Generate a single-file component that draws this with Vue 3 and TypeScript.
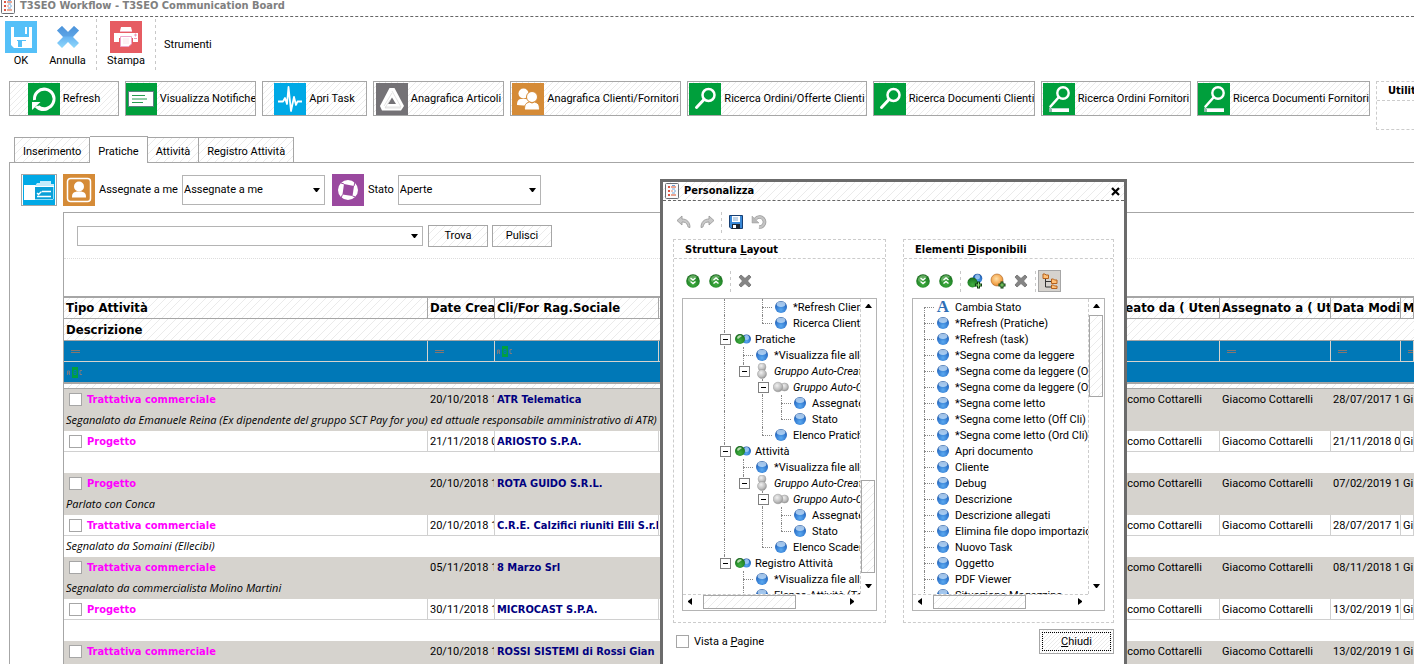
<script setup lang="ts">
import { ref } from 'vue'

interface Action { label: string; icon: string; width: number }
interface Row { type: string; created: string; company: string; note: string; modified: string }
interface Node { cells: string; icon: string; text: string; italic?: boolean }

const actions: Action[] = [
  { label: 'Refresh', icon: 'refresh', width: 110 },
  { label: 'Visualizza Notifiche', icon: 'note', width: 131 },
  { label: 'Apri Task', icon: 'pulse', width: 105 },
  { label: 'Anagrafica Articoli', icon: 'triangle', width: 131 },
  { label: 'Anagrafica Clienti/Fornitori', icon: 'people', width: 171 },
  { label: 'Ricerca Ordini/Offerte Clienti', icon: 'search', width: 180 },
  { label: 'Ricerca Documenti Clienti', icon: 'search', width: 162 },
  { label: 'Ricerca Ordini Fornitori', icon: 'searchbar', width: 150 },
  { label: 'Ricerca Documenti Fornitori', icon: 'searchbar', width: 173 },
]

const tabs = ['Inserimento', 'Pratiche', 'Attività', 'Registro Attività']
const activeTab = ref('Pratiche')
const assigned = ref('Assegnate a me')
const state = ref('Aperte')
const query = ref('')
const pageView = ref(false)

const rows: Row[] = [
  { type: 'Trattativa commerciale', created: '20/10/2018 1', company: 'ATR Telematica', note: 'Seganalato da Emanuele Reina (Ex dipendente del gruppo SCT Pay for you) ed attuale responsabile amministrativo di ATR)', modified: '28/07/2017 1' },
  { type: 'Progetto', created: '21/11/2018 0', company: 'ARIOSTO S.P.A.', note: '', modified: '21/11/2018 0' },
  { type: 'Progetto', created: '20/10/2018 1', company: 'ROTA GUIDO S.R.L.', note: 'Parlato con Conca', modified: '07/02/2019 1' },
  { type: 'Trattativa commerciale', created: '20/10/2018 1', company: 'C.R.E. Calzifici riuniti Elli S.r.l.', note: 'Segnalato da Somaini (Ellecibi)', modified: '28/07/2017 1' },
  { type: 'Trattativa commerciale', created: '05/11/2018 1', company: '8 Marzo Srl', note: 'Segnalato da commercialista Molino Martini', modified: '08/11/2018 1' },
  { type: 'Progetto', created: '30/11/2018 1', company: 'MICROCAST S.P.A.', note: '', modified: '13/02/2019 1' },
  { type: 'Trattativa commerciale', created: '20/10/2018 1', company: 'ROSSI SISTEMI di Rossi Gian', note: '', modified: '13/02/2019 1' },
]

// Connector codes: | line, . blank, t tee, l last, r first, b open box, e open box of a last child
const layoutTree: Node[] = [
  { cells: '|.t', icon: 'ball', text: '*Refresh Clienti' },
  { cells: '|.l', icon: 'ball', text: 'Ricerca Clienti' },
  { cells: 'b', icon: 'pair', text: 'Pratiche' },
  { cells: '|t', icon: 'ball', text: '*Visualizza file allegati' },
  { cells: '|e', icon: 'vgroup', text: 'Gruppo Auto-Creato', italic: true },
  { cells: '|.b', icon: 'hgroup', text: 'Gruppo Auto-Creato', italic: true },
  { cells: '|.|t', icon: 'ball', text: 'Assegnate a me' },
  { cells: '|.|l', icon: 'ball', text: 'Stato' },
  { cells: '|.l', icon: 'ball', text: 'Elenco Pratiche' },
  { cells: 'b', icon: 'pair', text: 'Attività' },
  { cells: '|t', icon: 'ball', text: '*Visualizza file allegati' },
  { cells: '|e', icon: 'vgroup', text: 'Gruppo Auto-Creato', italic: true },
  { cells: '|.b', icon: 'hgroup', text: 'Gruppo Auto-Creato', italic: true },
  { cells: '|.|t', icon: 'ball', text: 'Assegnate a me' },
  { cells: '|.|l', icon: 'ball', text: 'Stato' },
  { cells: '|.l', icon: 'ball', text: 'Elenco Scadenze' },
  { cells: 'e', icon: 'pair', text: 'Registro Attività' },
  { cells: '.t', icon: 'ball', text: '*Visualizza file allegati' },
  { cells: '.t', icon: 'ball', text: 'Elenco Attività (Totale)' },
]

const available: Node[] = [
  'Cambia Stato', '*Refresh (Pratiche)', '*Refresh (task)', '*Segna come da leggere',
  '*Segna come da leggere (Off Cli)', '*Segna come da leggere (Ord Cli)', '*Segna come letto',
  '*Segna come letto (Off Cli)', '*Segna come letto (Ord Cli)', 'Apri documento', 'Cliente', 'Debug',
  'Descrizione', 'Descrizione allegati', 'Elimina file dopo importazione', 'Nuovo Task', 'Oggetto',
  'PDF Viewer', 'Situazione Magazzino',
].map((text, i) => ({ cells: i === 0 ? 'r' : 't', icon: i === 0 ? 'letter' : 'ball', text }))

const cellClass: Record<string, string> = { '|': 'line', '.': 'blank', t: 'line tee', l: 'up tee', r: 'down tee', b: 'line tee box', e: 'up tee box' }
</script>

<template>
  <div class="app">
    <svg class="defs" aria-hidden="true">
      <defs>
        <radialGradient id="gBlue" cx="50%" cy="75%" r="75%"><stop offset="0" stop-color="#5aa9f0" /><stop offset="0.6" stop-color="#3178cf" /><stop offset="1" stop-color="#1d5099" /></radialGradient>
        <radialGradient id="gGreen" cx="50%" cy="70%" r="75%"><stop offset="0" stop-color="#3fae3f" /><stop offset="0.6" stop-color="#24882a" /><stop offset="1" stop-color="#145a18" /></radialGradient>
        <radialGradient id="gGray" cx="40%" cy="35%" r="75%"><stop offset="0" stop-color="#f0f0f0" /><stop offset="0.6" stop-color="#bdbdbd" /><stop offset="1" stop-color="#858585" /></radialGradient>
        <radialGradient id="gOrange" cx="45%" cy="40%" r="75%"><stop offset="0" stop-color="#ffe0a8" /><stop offset="0.6" stop-color="#f3a34a" /><stop offset="1" stop-color="#b8641a" /></radialGradient>
        <linearGradient id="gX" x1="0" y1="0" x2="0" y2="1"><stop offset="0" stop-color="#4a94dd" /><stop offset="0.5" stop-color="#69b4f2" /><stop offset="1" stop-color="#8ed8fb" /></linearGradient>
      </defs>
      <symbol id="i-app" viewBox="0 0 16 16">
        <rect x="1.5" y="0.5" width="13" height="15" rx="1" fill="#fbfbfb" stroke="#6a6e74" />
        <path d="M4 4h2M4 8h2M4 12h2" stroke="#dd5544" stroke-width="2" /><path d="M7 4h5M7 12h5" stroke="#e58a70" stroke-width="1.5" /><path d="M7 8h2" stroke="#e58a70" /><path d="M10 8h2M8 2.5h3M8 6h3M8 10h3" stroke="#6fa4d8" />
      </symbol>
      <symbol id="i-ok" viewBox="0 0 32 32">
        <path d="M0 0h32v32H0z" fill="#55c0f8" /><path d="M6 6h3v10h15V6h3v21H9l-3-3z" fill="#fff" /><path d="M20 6h2v7h-2z" fill="#fff" /><path d="M12 19h9v1h-9zM13 20h4v6h-4z" fill="#55c0f8" />
      </symbol>
      <symbol id="i-cancel" viewBox="0 0 32 32">
        <path d="m10 5 6 6 6-6 5 4.500-6 6.500 6 6-5 5-6-6-6 6-5-5 6-6-6-6.500z" fill="url(#gX)" /><path d="m10 5 6 6 6-6 5 4.500-6 6H11l-6-6z" fill="#4f92d6" opacity=".45" />
      </symbol>
      <symbol id="i-print" viewBox="0 0 32 32">
        <path d="M0 0h32v32H0z" fill="#e65c62" /><path d="M11 6h10l1 4H10zM4 12h24v9h-5v-4H9v4H4z" fill="#fff" /><path d="M10.500 15.500h11V23l-3 2.500h-8z" fill="#fff" stroke="#eda6cc" /><path d="M10 10.500h12" stroke="#f3b4c8" /><path d="M24 14h3M25.500 12.500v3M24 17.500h3" stroke="#ec9bbd" /><path d="M13 18h6M13 20h6M13 22h6" stroke="#fbe2ea" />
      </symbol>
      <symbol id="i-refresh" viewBox="0 0 32 32">
        <path d="M0 0h32v32H0z" fill="#009f3c" /><path d="M6.500 17A9.800 9.800 0 1 1 10 23.500" fill="none" stroke="#fff" stroke-width="3" /><path d="M4 27V19h8.500z" fill="#fff" /><path d="M8 23.500a10.500 10.500 0 0 0 12 2" fill="none" stroke="#fff" stroke-width="3" />
      </symbol>
      <symbol id="i-note" viewBox="0 0 32 32">
        <path d="M0 0h32v32H0z" fill="#009f3c" /><rect x="3.500" y="8.500" width="25" height="15" fill="#fff" stroke="#5c7f80" /><path d="M7 12.500h13M7 16h15M7 19.500h11" stroke="#269a50" stroke-width="1.200" />
      </symbol>
      <symbol id="i-pulse" viewBox="0 0 32 32">
        <path d="M0 0h32v32H0z" fill="#00a9e6" /><path d="M4 18.500h5l2-3.500 2 6L14.500 4 17 28l3-14 2 8 1.500-3.500H28" fill="none" stroke="#fff" stroke-width="1.800" stroke-linejoin="round" />
      </symbol>
      <symbol id="i-triangle" viewBox="0 0 32 32">
        <path d="M0 0h32v32H0z" fill="#747276" /><path d="M13.500 5h5L28 23l-3 4.500H6L4 23z" fill="#fff" /><path d="m16 14.500 4 6.500h-8z" fill="#747276" /><path d="m16 8 9 16H9M16 10 8 23M14 17l-5 8h16" fill="none" stroke="#d7d7d7" stroke-width=".7" />
      </symbol>
      <symbol id="i-people" viewBox="0 0 32 32">
        <path d="M0 0h32v32H0z" fill="#d58b37" /><circle cx="11.500" cy="10.500" r="5" fill="#fff" /><path d="M5 22c0-5 2-6 4.500-6h5c2 0 3 1 3 3v4z" fill="#fff" /><circle cx="20" cy="14" r="5.500" fill="#fff" stroke="#d58b37" /><path d="M12.500 27c0-5 1-7 5-8l2.500 1 2.500-1c4 1 5 3 5 8z" fill="#fff" stroke="#d58b37" />
      </symbol>
      <symbol id="i-search" viewBox="0 0 32 32">
        <path d="M0 0h32v32H0z" fill="#009f3c" /><circle cx="19.500" cy="12" r="6" fill="none" stroke="#fff" stroke-width="2.500" /><path d="m15 16.500-7.500 8" stroke="#fff" stroke-width="3" stroke-linecap="round" />
      </symbol>
      <symbol id="i-searchbar" viewBox="0 0 32 32">
        <path d="M0 0h32v32H0z" fill="#009f3c" /><circle cx="20" cy="10" r="5.700" fill="none" stroke="#fff" stroke-width="2.400" /><path d="m15.500 14.500-8 9" stroke="#fff" stroke-width="2.600" stroke-linecap="round" /><path d="M6 25h20v4H6z" fill="#fff" /><path d="M6 25h3v4H6z" fill="#8fb8aa" /><path d="M8 25h18v1H8z" fill="#b7dccc" />
      </symbol>
      <symbol id="i-folder" viewBox="0 0 32 32">
        <path d="M0 0h32v32H0z" fill="#00a9e6" /><path d="M1 10h12v15H1z" fill="#fff" /><path d="M17 8V6h11v3h3v15l-2 1H12V11l2-3z" fill="#c4ecfc" /><path d="M12 12h19v12l-1 1H12z" fill="#0aa0d8" /><path d="M12 11.500h19" stroke="#fff" /><path d="M12 24.500h18M30.500 12v12" stroke="#8fdcf8" /><path d="m14 18 1.500 1.500 3-3M19 16.500h9M14 21.500h14" stroke="#fff" fill="none" stroke-width="1.300" />
      </symbol>
      <symbol id="i-user" viewBox="0 0 32 32">
        <path d="M0 0h32v32H0z" fill="#d58b37" /><rect x="4.500" y="4.500" width="23" height="23" rx="3" fill="none" stroke="#fff" stroke-width="1.500" /><circle cx="16" cy="12.500" r="5" fill="#fff" /><path d="M9 23.500c0-4 1-5 4.500-6h5c3.500 1 4.500 2 4.500 6z" fill="#fff" />
      </symbol>
      <symbol id="i-ring" viewBox="0 0 32 32">
        <path d="M0 0h32v32H0z" fill="#9a499f" /><circle cx="16" cy="16" r="10" fill="#fff" /><path d="m12 10 10 2-1.500 10L10.500 20.500z" fill="#9a499f" /><path d="m12 10-3-1M22 12l1-4M20.500 22l3 1M10.500 20.500 9 24" stroke="#9a499f" />
      </symbol>
      <symbol id="i-ball" viewBox="0 0 16 16">
        <circle cx="8" cy="8" r="6" fill="url(#gBlue)" /><ellipse cx="8" cy="5.300" rx="4.300" ry="2.700" fill="#d4e9fc" opacity=".7" />
      </symbol>
      <symbol id="i-pair" viewBox="0 0 16 16">
        <circle cx="11.500" cy="8" r="4.500" fill="url(#gBlue)" /><circle cx="11.500" cy="6.500" r="2.500" fill="#acd3fb" opacity=".8" /><circle cx="5" cy="8" r="5" fill="url(#gGreen)" /><path d="M2 7a3 3 0 0 1 5-2L3 8z" fill="#d9efcf" opacity=".8" />
      </symbol>
      <symbol id="i-vgroup" viewBox="0 0 16 16"><circle cx="8" cy="4" r="4" fill="url(#gGray)" stroke="#aaa" stroke-width=".5" /><circle cx="8" cy="11" r="4.500" fill="url(#gGray)" stroke="#999" stroke-width=".5" /></symbol>
      <symbol id="i-hgroup" viewBox="0 0 16 16"><circle cx="11.500" cy="8" r="4" fill="url(#gGray)" stroke="#999" stroke-width=".5" /><circle cx="5" cy="8" r="4.800" fill="url(#gGray)" stroke="#999" stroke-width=".5" /></symbol>
      <symbol id="i-expand" viewBox="0 0 16 16"><circle cx="8" cy="8" r="6.800" fill="url(#gGreen)" /><path d="M3 7c0-5 7-6 9-3L4 9z" fill="#8ccb86" opacity=".6" /><path d="m5.500 5 2.500 2 2.500-2M5.500 8.500l2.500 2 2.500-2" fill="none" stroke="#fff" stroke-width="1.400" /></symbol>
      <symbol id="i-collapse" viewBox="0 0 16 16"><circle cx="8" cy="8" r="6.800" fill="url(#gGreen)" /><path d="M3 7c0-5 7-6 9-3L4 9z" fill="#8ccb86" opacity=".6" /><path d="m5.500 7 2.500-2 2.500 2M5.500 10.500l2.500-2 2.500 2" fill="none" stroke="#fff" stroke-width="1.400" /></symbol>
      <symbol id="i-remove" viewBox="0 0 16 16"><path d="m4 2 4 3.500L12 2l2 2-3.500 4 3.500 4-2 2-4-3.500L4 14l-2-2 3.500-4L2 4z" fill="#858585" stroke="#6f6f6f" stroke-width=".8" /></symbol>
      <symbol id="i-addgroup" viewBox="0 0 16 16"><circle cx="10.500" cy="5.500" r="4.800" fill="url(#gBlue)" /><circle cx="10.500" cy="3.800" r="2.500" fill="#b5d9fb" opacity=".7" /><circle cx="5.500" cy="9.500" r="5" fill="url(#gGreen)" /><path d="M11.500 8.500v7M8 12h7" stroke="#0c3d10" stroke-width="3" /><path d="M11.500 9.500v5M9 12h5" stroke="#8ce070" /></symbol>
      <symbol id="i-additem" viewBox="0 0 16 16"><circle cx="7" cy="7" r="6" fill="url(#gOrange)" stroke="#a8601f" stroke-width=".6" /><path d="M12 8.500v7M8.500 12h7" stroke="#0c3d10" stroke-width="3" /><path d="M12 9.500v5M9.500 12h5" stroke="#8ce070" /></symbol>
      <symbol id="i-tree" viewBox="0 0 16 16"><path d="M3.500 5v9H9M3.500 8.500H9" fill="none" stroke="#333" /><path d="M1 1h2l1 1h2.500v3.500H1zM9.500 6h2l1 1H15v3.500H9.500zM9.500 12h2l1 1H15v2.500H9.500z" fill="#ffc078" stroke="#b4621c" /></symbol>
      <symbol id="i-undo" viewBox="0 0 16 16"><path d="M1 6.500 6 2v3c5 0 8 3 8 8.500-2 0-2-.5-2.500-2C11 9 9 8 6 8v3z" fill="#c8c8c8" stroke="#959595" stroke-width=".8" /></symbol>
      <symbol id="i-redo" viewBox="0 0 16 16"><path d="M15 6.500 10 2v3c-5 0-8 3-8 8.500 2 0 2-.5 2.500-2C5 9 7 8 10 8v3z" fill="#c8c8c8" stroke="#959595" stroke-width=".8" /></symbol>
      <symbol id="i-save" viewBox="0 0 16 16"><path d="M1.500 1.500h13v13H3l-1.500-1.500z" fill="#3988d6" stroke="#173f73" /><path d="M4 2h8v6H4z" fill="#fff" /><path d="M5 4h5M5 6h5" stroke="#7fa7cf" /><path d="M4 10h8v5H4z" fill="#1b2532" /><path d="M5 11h3v3H5z" fill="#fff" /></symbol>
      <symbol id="i-reset" viewBox="0 0 16 16"><path d="M4.500 5A5 5 0 1 1 8 13" fill="none" stroke="#9a9a9a" stroke-width="3.600" /><path d="M4.500 5A5 5 0 1 1 8 13" fill="none" stroke="#c4c4c4" stroke-width="2.200" /><path d="M1 2v7h7z" fill="#b8b8b8" stroke="#999" stroke-width=".5" /></symbol>
      <symbol id="i-up" viewBox="0 0 7 4"><path d="M0 4h7L4 0H3z" /></symbol>
      <symbol id="i-down" viewBox="0 0 7 4"><path d="M0 0h7L4 4H3z" /></symbol>
      <symbol id="i-left" viewBox="0 0 4 7"><path d="M4 0v7L0 4V3z" /></symbol>
      <symbol id="i-right" viewBox="0 0 4 7"><path d="M0 0v7l4-3V3z" /></symbol>
      <symbol id="i-abc" viewBox="0 0 16 11">
        <path d="M5 0h6v11H5z" fill="#00a040" /><path d="M0.500 8V4h2v4M0.500 6h2M15 3.500h-2v4h2" fill="none" stroke="#7b7a80" /><path d="M7 3.500h2v4H7zM7 5.500h2" fill="none" stroke="#0078b7" />
      </symbol>
    </svg>

    <header class="titlebar">
      <svg class="i16"><use href="#i-app" /></svg>
      <span>T3SEO Workflow - T3SEO Communication Board</span>
    </header>

    <nav class="toolbar">
      <button class="tool ok"><svg class="i32"><use href="#i-ok" /></svg>OK</button>
      <button class="tool cancel"><svg class="i32"><use href="#i-cancel" /></svg>Annulla</button>
      <i class="vsep"></i>
      <button class="tool print"><svg class="i32"><use href="#i-print" /></svg>Stampa</button>
      <i class="vsep"></i>
      <button class="menu">Strumenti</button>
    </nav>

    <div class="actions">
      <button v-for="a in actions" :key="a.label" class="action hatch" :style="{ width: a.width + 'px' }">
        <svg class="i32"><use :href="'#i-' + a.icon" /></svg>{{ a.label }}
      </button>
      <section class="utility"><h2>Utilità</h2></section>
    </div>

    <div class="tabs" role="tablist">
      <button v-for="t in tabs" :key="t" role="tab" :aria-selected="t === activeTab" :class="['tab', { active: t === activeTab, hatch: t !== activeTab }]" @click="activeTab = t">{{ t }}</button>
    </div>

    <main class="panel">
      <div class="filters">
        <button class="folder" aria-label="Pratiche"><svg class="i32"><use href="#i-folder" /></svg></button>
        <svg class="i32"><use href="#i-user" /></svg>
        <label for="assigned">Assegnate a me</label>
        <span class="select"><select id="assigned" v-model="assigned"><option>Assegnate a me</option><option>Tutte</option></select><svg class="arrow"><use href="#i-down" /></svg></span>
        <svg class="i32"><use href="#i-ring" /></svg>
        <label for="state">Stato</label>
        <span class="select"><select id="state" v-model="state"><option>Aperte</option><option>Chiuse</option></select><svg class="arrow"><use href="#i-down" /></svg></span>
      </div>

      <section class="grid">
        <form class="search" @submit.prevent>
          <span class="combo"><input v-model="query" type="text" aria-label="Testo da cercare" /><svg class="arrow"><use href="#i-down" /></svg></span>
          <button class="hatch">Trova</button>
          <button class="hatch" type="button" @click="query = ''">Pulisci</button>
        </form>
        <table>
          <colgroup><col class="c-type" /><col class="c-date" /><col class="c-company" /><col /><col class="c-user" /><col class="c-user" /><col class="c-mod" /><col class="c-by" /></colgroup>
          <thead>
            <tr class="h1 hatch"><th>Tipo Attività</th><th>Date Creazione</th><th>Cli/For Rag.Sociale</th><th></th><th>Creato da ( Utente )</th><th>Assegnato a ( Utente )</th><th>Data Modifica</th><th>Modificato da</th></tr>
            <tr class="h2 hatch"><th colspan="8">Descrizione</th></tr>
            <tr class="f1"><td><i class="eq"></i></td><td><i class="eq"></i></td><td><svg class="abc"><use href="#i-abc" /></svg></td><td></td><td></td><td><i class="eq"></i></td><td><i class="eq"></i></td><td><i class="eq"></i></td></tr>
            <tr class="f2"><td colspan="8"><svg class="abc"><use href="#i-abc" /></svg></td></tr>
            <tr class="strip hatch"><td colspan="8"></td></tr>
          </thead>
          <tbody v-for="(r, i) in rows" :key="i" :class="{ odd: i % 2 === 0 }">
            <tr class="main">
              <td><label class="type"><input type="checkbox" />{{ r.type }}</label></td>
              <td>{{ r.created }}</td><td class="company">{{ r.company }}</td><td></td>
              <td>Giacomo Cottarelli</td><td>Giacomo Cottarelli</td><td>{{ r.modified }}</td><td>Giacomo Cottarelli</td>
            </tr>
            <tr class="note"><td colspan="8">{{ r.note }}</td></tr>
          </tbody>
        </table>
      </section>
    </main>

    <div class="dialog" role="dialog" aria-labelledby="dlg-title">
      <header class="dlg-head hatch">
        <svg class="i16"><use href="#i-app" /></svg><h1 id="dlg-title">Personalizza</h1>
        <button aria-label="Chiudi finestra"><svg class="close" viewBox="0 0 9 9"><path d="m1 1 7 7M8 1 1 8" stroke="#000" stroke-width="2.200" /></svg></button>
      </header>
      <div class="icons top">
        <button aria-label="Annulla"><svg class="i16"><use href="#i-undo" /></svg></button>
        <button aria-label="Ripeti"><svg class="i16"><use href="#i-redo" /></svg></button>
        <i class="vsep"></i>
        <button aria-label="Salva"><svg class="i16"><use href="#i-save" /></svg></button>
        <button aria-label="Ripristina"><svg class="i16"><use href="#i-reset" /></svg></button>
      </div>
      <div class="groups">
        <section class="group">
          <h2>Struttura <u>L</u>ayout</h2>
          <div class="icons">
            <button aria-label="Espandi"><svg class="i16"><use href="#i-expand" /></svg></button>
            <button aria-label="Comprimi"><svg class="i16"><use href="#i-collapse" /></svg></button>
            <i class="vsep"></i>
            <button aria-label="Elimina"><svg class="i16"><use href="#i-remove" /></svg></button>
          </div>
          <div class="list">
            <ul class="tree deep">
              <li v-for="(n, i) in layoutTree" :key="i">
                <i v-for="(c, k) in n.cells.split('')" :key="k" :class="['cell', cellClass[c]]"></i>
                <svg class="node"><use :href="'#i-' + n.icon" /></svg><span :class="{ italic: n.italic }">{{ n.text }}</span>
              </li>
            </ul>
            <div class="vscroll"><svg class="arrow"><use href="#i-up" /></svg><div class="track low"><div class="thumb hatch"></div></div><svg class="arrow"><use href="#i-down" /></svg></div>
            <div class="hscroll"><svg class="side"><use href="#i-left" /></svg><div class="track"><div class="thumb hatch"></div></div><svg class="side"><use href="#i-right" /></svg></div>
          </div>
        </section>
        <section class="group">
          <h2>Elementi <u>D</u>isponibili</h2>
          <div class="icons">
            <button aria-label="Espandi"><svg class="i16"><use href="#i-expand" /></svg></button>
            <button aria-label="Comprimi"><svg class="i16"><use href="#i-collapse" /></svg></button>
            <i class="vsep"></i>
            <button aria-label="Aggiungi gruppo"><svg class="i16"><use href="#i-addgroup" /></svg></button>
            <button aria-label="Aggiungi elemento"><svg class="i16"><use href="#i-additem" /></svg></button>
            <button aria-label="Elimina"><svg class="i16"><use href="#i-remove" /></svg></button>
            <i class="vsep"></i>
            <button class="pressed" aria-label="Vista ad albero" aria-pressed="true"><svg class="i16"><use href="#i-tree" /></svg></button>
          </div>
          <div class="list">
            <ul class="tree">
              <li v-for="n in available" :key="n.text">
                <i v-for="(c, k) in n.cells.split('')" :key="k" :class="['cell', cellClass[c]]"></i>
                <b v-if="n.icon === 'letter'" class="letter">A</b>
                <svg v-else class="node"><use :href="'#i-' + n.icon" /></svg><span>{{ n.text }}</span>
              </li>
            </ul>
            <div class="vscroll"><svg class="arrow"><use href="#i-up" /></svg><div class="track high"><div class="thumb hatch"></div></div><svg class="arrow"><use href="#i-down" /></svg></div>
            <div class="hscroll"><svg class="side"><use href="#i-left" /></svg><div class="track"><div class="thumb hatch"></div></div><svg class="side"><use href="#i-right" /></svg></div>
          </div>
        </section>
      </div>
      <footer>
        <label><input v-model="pageView" type="checkbox" />Vista a&nbsp;<u>P</u>agine</label>
        <button class="done hatch"><span><u>C</u>hiudi</span></button>
      </footer>
    </div>
  </div>
</template>

<style>
body { background: #fff; }
</style>

<style scoped>
* { box-sizing: border-box; }
.app { position: relative; height: 100vh; overflow: hidden; background: #fff; color: #000; font: 11px/16px Tahoma, Roboto, "Noto Sans", sans-serif; display: flex; flex-direction: column; white-space: nowrap; }
.defs { position: absolute; width: 0; height: 0; }
button, input, select { font: inherit; color: inherit; margin: 0; padding: 0; border: 0; border-radius: 0; background-color: transparent; white-space: nowrap; }
h1, h2, ul { margin: 0; padding: 0; font-size: 11px; list-style: none; }
h1, h2, th, .titlebar, .type, .main .company { font-family: Tahoma, "DejaVu Sans Condensed", sans-serif; }
label { display: inline-flex; align-items: center; }
.i32 { width: 32px; height: 32px; flex: none; display: block; }
.i16 { width: 16px; height: 16px; flex: none; display: block; }
.arrow { width: 7px; height: 4px; flex: none; }
.hatch { background-color: #fff; background-image: linear-gradient(135deg, transparent 45%, #ebebeb 45%, #ebebeb 55%, transparent 55%); background-size: 8px 8px; }

.titlebar { flex: none; display: flex; align-items: center; gap: 4px; height: 17px; padding-bottom: 4px; border-bottom: 1px dashed #666; color: #808080; font-weight: bold; }
.toolbar { flex: none; display: flex; height: 64px; padding: 2px 0 0 1px; }
.tool { width: 40px; height: 52px; padding-top: 2px; display: flex; flex-direction: column; align-items: center; }
.cancel { width: 53px; margin-right: 2px; }
.print { width: 58px; }
.vsep { flex: none; width: 1px; height: 51px; background: repeating-linear-gradient(#c8c8c8 0 3px, transparent 3px 6px); }
.menu { height: 51px; padding: 0 8px; }

.actions { flex: none; display: flex; gap: 6px; padding-left: 9px; height: 49px; align-items: flex-start; }
.action { flex: none; display: flex; align-items: center; justify-content: center; gap: 3px; height: 35px; border: 1px solid #a6a6a6; background-size: 6px 6px; overflow: hidden; }
.utility { flex: 1 0 130px; height: 49px; border: 1px dashed #ccc; }
.utility h2 { height: 19px; padding-left: 11px; line-height: 18px; border-bottom: 1px dashed #ccc; }

.tabs { flex: none; display: flex; align-items: flex-end; height: 32px; padding-left: 14px; }
.tab { height: 25px; padding: 3px 8px 0 8px; border: 1px solid #a6a6a6; border-bottom: 0; }
.tab + .tab { border-left: 0; }
.tab.active { height: 27px; background: #fff; position: relative; margin-bottom: -1px; border-left: 0; }
.panel { flex: 1; min-height: 0; margin-left: 9px; border-left: 1px solid #a6a6a6; border-top: 1px solid #a6a6a6; padding: 11px 0 0 11px; }
.filters { display: flex; align-items: center; height: 32px; }
.folder { width: 36px; height: 32px; border: 1px solid #a6a6a6; padding: 0 1px; margin-right: 6px; overflow: hidden; }
.filters label { padding-left: 4px; }
.select { position: relative; display: flex; align-items: center; width: 143px; height: 30px; margin: 0 7px 0 4px; border: 1px solid #b4b4b4; }
.select select { appearance: none; width: 100%; height: 100%; padding-left: 1px; outline: 0; }
.select .arrow { position: absolute; right: 4px; }

.grid { margin: 6px 0 0 42px; border-left: 1px solid #a6a6a6; border-top: 1px solid #a6a6a6; }
.search { display: flex; align-items: center; gap: 4px; height: 46px; padding-left: 13px; border-bottom: 1px dotted #ddd; }
.combo { display: flex; align-items: center; width: 346px; height: 20px; margin-right: 1px; padding-right: 4px; border: 1px solid #b4b4b4; }
.combo input { flex: 1; min-width: 0; outline: 0; }
.search button { width: 60px; height: 22px; border: 1px solid #a6a6a6; }

table { width: 100%; table-layout: fixed; border-collapse: separate; border-spacing: 0; margin-top: 37px; }
.c-type { width: 364px; } .c-date { width: 67px; } .c-company { width: 164px; } .c-user { width: 111px; } .c-mod { width: 70px; } .c-by { width: 13px; }
th, td { padding: 0 2px; overflow: hidden; text-align: left; }
th { font-size: 13px; }
.h1 th { height: 23px; border-top: 2px solid #a6a6a6; border-right: 1px solid #a6a6a6; border-bottom: 1px solid #a6a6a6; }
.h2 th { height: 22px; border-bottom: 1px solid #a6a6a6; }
.f1 td, .f2 td { height: 21px; background: #0078b7; border-right: 1px solid #d6d3ce; border-bottom: 1px solid #d6d3ce; line-height: 0; }
.f2 td { height: 22px; border-bottom: 2px solid #a6a6a6; border-right: 0; padding-left: 3px; }
.eq { display: block; width: 9px; height: 3px; margin-left: 5px; border-top: 1px solid #85766f; border-bottom: 1px solid #85766f; }
.abc { width: 16px; height: 11px; }
.strip td { height: 5px; padding: 0; border-bottom: 1px solid #a6a6a6; line-height: 0; }
.main td { height: 21px; padding-top: 1px; border-right: 1px solid #d0d0d0; border-bottom: 1px solid #d0d0d0; }
.main .company { padding-right: 0; }
.note td { height: 21px; padding-bottom: 2px; font-style: italic; font-family: Tahoma, "Open Sans", sans-serif; }
.odd .main td, .odd .note td { background: #d6d3ce; border-color: #d6d3ce; }
.type { display: flex; color: #f0f; font-weight: bold; }
.company { color: #000080; font-weight: bold; }
input[type="checkbox"] { appearance: none; width: 13px; height: 13px; border: 1px solid #a6a6a6; background: #fff; margin: 0 5px 0 3px; }
input[type="checkbox"]:checked { background: #555; }

.dialog { position: absolute; left: 660px; top: 179px; bottom: 0; width: 467px; background: #fff; border: 3px solid #6b6b6b; border-bottom: 0; }
.dlg-head { display: flex; align-items: center; gap: 4px; height: 19px; padding: 0 4px 0 1px; border-bottom: 1px dashed #666; }
.dlg-head h1 { flex: 1; }
.dlg-head button { width: 9px; height: 16px; display: flex; align-items: center; }
.close { width: 9px; height: 9px; display: block; }
.icons { display: flex; align-items: center; height: 39px; padding: 0 0 0 9px; }
.icons button { width: 23px; height: 22px; display: flex; align-items: center; justify-content: center; }
.icons .vsep { height: 21px; margin: 0 2px 0 3px; }
.icons.top { height: 38px; padding-top: 4px; }
.icons .pressed { border: 1px solid #a6a6a6; background-color: #d6d3ce; }
.groups { display: grid; grid-template-columns: 213fr 211fr; gap: 17px; padding: 0 10px; }
.group { min-width: 0; height: 384px; border: 1px dashed #ccc; }
.group h2 { height: 19px; line-height: 20px; padding-left: 11px; border-bottom: 1px dashed #ccc; }
.group .icons { padding-top: 5px; padding-left: 7px; }
.list { display: grid; grid-template-columns: minmax(0, 1fr) 16px; grid-template-rows: 295px 16px; margin: 0 8px; border: 1px solid #b4b4b4; }
.tree { overflow: hidden; padding-left: 2px; }
.tree.deep { padding-left: 32px; }
.tree li { display: flex; align-items: center; height: 16px; }
.tree span { padding-top: 1px; }
.cell { position: relative; flex: none; width: 19px; height: 16px; }
.cell::before { content: ""; position: absolute; left: 9px; top: 0; bottom: 0; border-left: 1px dotted #888; display: none; }
.cell.line::before, .cell.up::before, .cell.down::before { display: block; }
.cell.up::before { bottom: 8px; }
.cell.down::before { top: 8px; }
.tee::after { content: ""; position: absolute; left: 9px; right: 0; top: 8px; border-top: 1px dotted #888; }
.tee.box::after { left: 5px; right: auto; top: 3px; width: 9px; height: 9px; border: 1px solid #808080; background: linear-gradient(#000, #000) center / 5px 1px no-repeat #fff; }
.node { flex: none; width: 16px; height: 16px; margin: 0 4px 0 1px; }
.letter { flex: none; width: 16px; margin: 0 4px 0 1px; color: #2f6fb7; font: bold 17px/16px "Liberation Serif", serif; text-align: center; }
.italic { font-style: italic; }
.vscroll { display: flex; flex-direction: column; align-items: center; padding: 5px 0 6px; border-left: 1px dashed #ccc; }
.vscroll .track { flex: 1; width: 100%; padding-top: 7px; }
.vscroll .track.low { padding-top: 172px; }
.vscroll .thumb { width: 14px; height: 82px; border: 1px solid #a6a6a6; }
.vscroll .low .thumb { height: 93px; }
.hscroll { grid-column: 1; display: flex; align-items: flex-start; height: 16px; padding: 0 6px 0 5px; border-top: 1px dashed #ccc; }
.hscroll .track { flex: 1; padding-left: 11px; }
.hscroll .thumb { width: 93px; height: 14px; border: 1px solid #a6a6a6; }
.side { width: 4px; height: 7px; flex: none; margin-top: 3px; }
footer { display: flex; align-items: center; justify-content: space-between; padding: 6px 10px 0 10px; }
.done { width: 75px; height: 25px; padding: 2px; border: 1px solid #a6a6a6; background-size: 4px 4px; }
.done span { display: block; height: 19px; line-height: 17px; border: 1px dotted #000; }
</style>
